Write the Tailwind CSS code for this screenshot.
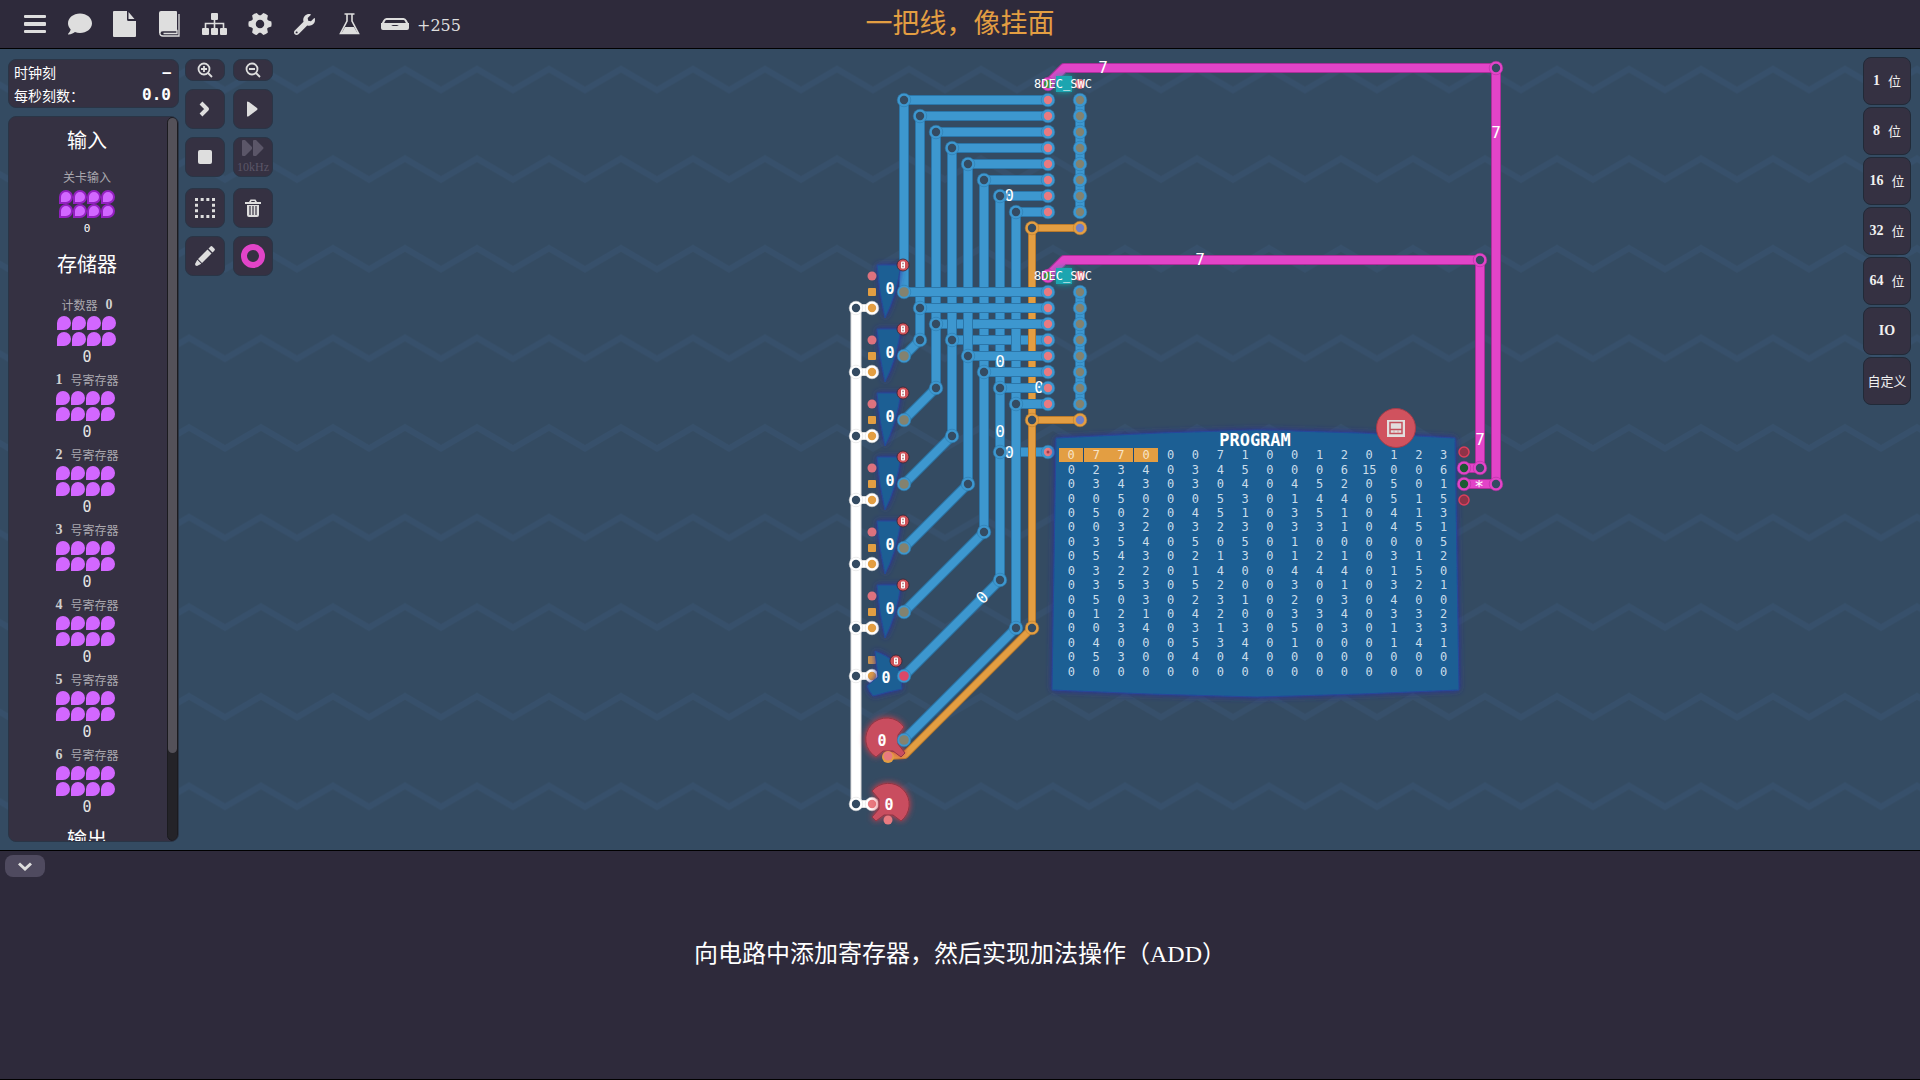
<!DOCTYPE html>
<html lang="zh-CN">
<head>
  <meta charset="UTF-8" />
  <meta name="viewport" content="width=device-width, initial-scale=1.0" />
  <script src="https://cdn.jsdelivr.net/npm/@tailwindcss/browser@4"></script>
  <title>一把线，像挂面</title>
</head>
<body class="h-screen flex flex-col overflow-hidden bg-[#2e2a3b] text-white font-['Noto_Sans','Noto_Sans_CJK_SC',sans-serif]">

  <!-- Top bar -->
  <header class="relative h-[49px] shrink-0 flex items-center border-b border-black pl-3 text-[#dedede]">
    <nav class="flex items-center" aria-label="工具栏">
      <button aria-label="菜单" class="w-[45px] h-8 flex items-center justify-center">
        <svg class="w-[22px] h-[18px]" viewBox="0 0 22 18" fill="currentColor"><rect width="22" height="3" rx="1"/><rect y="7" width="22" height="4" rx="1"/><rect y="15" width="22" height="3" rx="1"/></svg>
      </button>
      <button aria-label="对话" class="w-[45px] h-8 flex items-center justify-center">
        <svg class="w-6 h-6" viewBox="0 0 512 512" fill="currentColor"><path d="M256 32C114.6 32 0 125.1 0 240c0 49.6 21.4 95 57 130.7C44.5 421.1 2.7 466 2.2 466.5c-2.2 2.3-2.8 5.7-1.5 8.7S4.800 480 8 480c66.300 0 116-31.800 140.600-51.400 32.700 12.300 69 19.400 107.400 19.400 141.400 0 256-93.100 256-208S397.400 32 256 32z"/></svg>
      </button>
      <button aria-label="文件" class="w-[45px] h-8 flex items-center justify-center">
        <svg class="w-[23px] h-[26px]" viewBox="0 0 23 26" fill="currentColor"><path d="M1 0h13v8.500a1.500 1.500 0 0 0 1.500 1.500H23v15a1 1 0 0 1-1 1H1a1 1 0 0 1-1-1V1a1 1 0 0 1 1-1zM15.500 1l6 7h-6z"/></svg>
      </button>
      <button aria-label="手册" class="w-[45px] h-8 flex items-center justify-center">
        <svg class="w-[21px] h-[26px]" viewBox="0 0 21 26" fill="none" stroke="currentColor"><path d="M2 0h15a1 1 0 0 1 1 1v18H5c-3 0-3.500 2-3.500 3H0V2a2 2 0 0 1 2-2z" fill="currentColor" stroke="none"/><path d="M20 3v22H4c-4 0-4.500-5.500 0-5.500h14v3H4.500" stroke-width="1.300"/></svg>
      </button>
      <button aria-label="架构" class="w-[45px] h-8 flex items-center justify-center">
        <svg class="w-[25px] h-[22px]" viewBox="0 0 25 22" fill="currentColor"><rect x="9" width="7" height="7" rx="1"/><rect y="15" width="7" height="7" rx="1"/><rect x="9" y="15" width="7" height="7" rx="1"/><rect x="18" y="15" width="7" height="7" rx="1"/><path d="M3.500 15v-4.500h18V15M12.500 7v8" fill="none" stroke="currentColor" stroke-width="1.600"/></svg>
      </button>
      <button aria-label="设置" class="w-[45px] h-8 flex items-center justify-center">
        <svg class="w-6 h-6" viewBox="-12 -12 24 24" fill="currentColor"><circle r="6.500" fill="none" stroke="currentColor" stroke-width="4.500"/><g id="teeth"><path id="tooth" d="M7-4L11.300-2.600Q12 0 11.300 2.600L7 4z"/><use href="#tooth" transform="rotate(60)"/><use href="#tooth" transform="rotate(120)"/></g><use href="#teeth" transform="rotate(180)"/></svg>
      </button>
      <button aria-label="工具" class="w-[45px] h-8 flex items-center justify-center">
        <svg class="w-[21px] h-[21px]" viewBox="0 0 512 512" fill="currentColor"><path d="M507.730 109.100c-2.240-9.030-13.540-12.090-20.120-5.510l-74.360 74.360-67.880-11.310-11.310-67.880 74.360-74.360c6.620-6.620 3.430-17.900-5.660-20.160-47.380-11.740-99.550.91-136.580 37.930-39.640 39.640-50.550 97.100-34.050 147.200L18.740 402.760c-24.990 24.990-24.990 65.510 0 90.500 24.990 24.990 65.510 24.990 90.500 0l213.210-213.210c50.120 16.710 107.470 5.680 147.370-34.220 37.070-37.070 49.700-89.320 37.910-136.730zM64 472c-13.250 0-24-10.750-24-24 0-13.260 10.750-24 24-24s24 10.740 24 24c0 13.250-10.750 24-24 24z"/></svg>
      </button>
      <button aria-label="测试" class="w-[45px] h-8 flex items-center justify-center">
        <svg class="w-[21px] h-[22px]" viewBox="0 0 21 22" fill="none" stroke="currentColor" stroke-width="1.600"><path d="M5.500 1h10M8 1v7L1.500 20.500h18L13 8V1"/><path d="M6 14h9l4 7H2z" fill="currentColor" stroke="none"/></svg>
      </button>
      <button aria-label="存储空间" class="w-[45px] h-8 flex items-center justify-center">
        <svg class="w-7 h-3" viewBox="0 0 28 12" fill="none" stroke="currentColor"><path d="M5.500 1h17Q24 1 25 3l1.500 3H1.500L3 3Q4 1 5.500 1z" stroke-width="2"/><path d="M0 5h9q1 3 3 3h4q2 0 3-3h9v5q0 2-2 2H2q-2 0-2-2z" fill="currentColor" stroke="none"/></svg>
      </button>
    </nav>
    <span class="pt-1 text-base font-['DejaVu_Serif',serif]">+255</span>
    <h1 class="absolute inset-x-0 top-0 h-[45px] flex items-center justify-center text-[27px] text-[#e39e42] font-['Noto_Sans_CJK_SC',sans-serif] pointer-events-none">一把线，像挂面</h1>
  </header>

  <main class="relative flex-1 min-h-0 flex items-start bg-[#344b62]">

    <!-- Circuit canvas -->
    <svg id="board" class="absolute inset-0 w-full h-full" viewBox="0 49 1920 801" preserveAspectRatio="xMidYMid slice" font-family="'DejaVu Sans Mono', monospace">
      <defs>
        <pattern id="waves" width="72" height="89.6" patternUnits="userSpaceOnUse" x="9" y="0">
          <path d="M-36 69L0 90L36 69L72 90L108 69" fill="none" stroke="#37506b" stroke-width="6"/>
          <path d="M-36 -20.600L0 .4L36 -20.600L72 .4L108 -20.600" fill="none" stroke="#37506b" stroke-width="6"/>
        </pattern>
        <filter id="glowBlue" x="-30%" y="-30%" width="160%" height="160%"><feDropShadow dx="0" dy="0" stdDeviation="3" flood-color="#2b2f9e"/></filter>
        <filter id="glowRed" x="-40%" y="-40%" width="180%" height="180%"><feDropShadow dx="0" dy="0" stdDeviation="3" flood-color="#d8404e"/></filter>
        <filter id="glowTeal" x="-60%" y="-60%" width="220%" height="220%"><feDropShadow dx="0" dy="0" stdDeviation="3" flood-color="#12a0a0"/></filter>
      </defs>
      <rect y="49" width="1920" height="801" fill="url(#waves)"/>
      <g id="wires" fill="none" stroke-linejoin="round"></g>
      <g id="labels" fill="#fff" font-size="16" text-anchor="middle"></g>
      <g id="joints"></g>
      <g id="chips"></g>
      <path d="M1056 438L1160 433L1257 430L1360 433L1455 438L1459 690L1360 694L1257 697L1150 694L1052 690z" fill="#1b5f94" stroke="#27489a" stroke-linejoin="round" filter="url(#glowBlue)"/>
      <text x="1255" y="446" fill="#fff" font-size="17" font-weight="bold" text-anchor="middle">PROGRAM</text>
      <foreignObject x="1059" y="448" width="398" height="232">
        <table class="w-[397px] h-[231px] table-fixed border-collapse text-center text-xs leading-[14px] text-[#c9dcea] font-['DejaVu_Sans_Mono',monospace]">
          <tbody id="memory"></tbody>
        </table>
      </foreignObject>
      <circle cx="1396" cy="428" r="19.500" fill="#d0525e" stroke="#a83c4a"/>
      <rect x="1387" y="420" width="18" height="17" fill="#e2dede"/>
      <path d="M1390 422.500h12v11h-12zM1390 429.500h12" fill="none" stroke="#c4505c" stroke-width="1.500"/>
      <path d="M1394 430v3M1398 430v3" stroke="#d8a0a4"/>
      <g id="pins"></g>
    </svg>

    <!-- Component palette -->
    <aside class="relative w-[171px] ml-2 mt-[10px] mb-2 self-stretch flex flex-col gap-2 min-h-0">
      <dl class="h-[49px] shrink-0 grid grid-cols-[auto_auto] justify-between items-center rounded-lg bg-[#353142] border border-[#2a3546] pl-[5px] pr-[7px] text-sm leading-[22px] font-['Noto_Sans_CJK_SC',sans-serif]">
        <dt>时钟刻</dt><dd class="text-right font-bold font-['DejaVu_Sans_Mono',monospace]">–</dd>
        <dt>每秒刻数：</dt><dd class="text-right text-base leading-[22px] font-bold font-['DejaVu_Sans_Mono',monospace]">0.0</dd>
      </dl>
      <div class="relative flex-1 min-h-0 overflow-hidden rounded-lg bg-[#353142] border border-[#2a3546]">
        <div id="palette" class="w-[156px] flex flex-col items-center font-['Noto_Sans_CJK_SC',sans-serif]"></div>
        <div class="absolute right-0 inset-y-0 w-[11px] rounded-lg bg-[#242328] border border-[#1b1b1f]">
          <div class="h-[88%] rounded-lg bg-[#545159]"></div>
        </div>
      </div>
    </aside>

    <!-- Simulation and edit tools -->
    <div class="relative ml-[6px] mt-[10px] grid grid-cols-2 gap-x-2 gap-y-2 text-[#dedede]">
      <button aria-label="放大" class="w-10 h-[22px] rounded-lg bg-[#353142] border border-[#2a3546] flex items-center justify-center">
        <svg class="w-4 h-4" viewBox="0 0 16 16" fill="none" stroke="currentColor" stroke-width="1.800"><circle cx="7" cy="7" r="5.500"/><path d="M11 11l4 4M4 7h6M7 4v6"/></svg>
      </button>
      <button aria-label="缩小" class="w-10 h-[22px] rounded-lg bg-[#353142] border border-[#2a3546] flex items-center justify-center">
        <svg class="w-4 h-4" viewBox="0 0 16 16" fill="none" stroke="currentColor" stroke-width="1.800"><circle cx="7" cy="7" r="5.500"/><path d="M11 11l4 4M4 7h6"/></svg>
      </button>
      <button aria-label="单步" class="w-10 h-10 rounded-lg bg-[#353142] border border-[#2a3546] flex items-center justify-center">
        <svg class="w-3 h-4" viewBox="0 0 12 16" fill="none" stroke="currentColor" stroke-width="4"><path d="M2 2l6 6-6 6" stroke-linejoin="round"/></svg>
      </button>
      <button aria-label="运行" class="w-10 h-10 rounded-lg bg-[#353142] border border-[#2a3546] flex items-center justify-center">
        <svg class="w-3 h-4" viewBox="0 0 12 16" fill="currentColor"><path d="M0 1q0-1 2 0l8 6q1 1 0 2l-8 6q-2 1-2 0z"/></svg>
      </button>
      <button aria-label="停止" class="w-10 h-10 rounded-lg bg-[#353142] border border-[#2a3546] flex items-center justify-center">
        <span class="w-[14px] h-[14px] rounded-xs bg-[#dedede]"></span>
      </button>
      <button class="w-10 h-10 rounded-lg bg-[#353142] border border-[#2a3546] flex flex-col items-center justify-center text-[#5b5668]">
        <svg class="w-[22px] h-4" viewBox="0 0 22 16" fill="currentColor"><path d="M1 0h2l7 7v2l-7 7H1q-1 0-1-1V1q0-1 1-1zM12 0h2l7 7q1 1 0 2l-7 7h-2q-1 0-1-1V1q0-1 1-1z"/></svg>
        <span class="pt-1 text-xs leading-[14px] font-['Liberation_Serif',serif]">10kHz</span>
      </button>
      <button aria-label="框选" class="mt-[3px] w-10 h-10 rounded-lg bg-[#353142] border border-[#2a3546] flex items-center justify-center">
        <svg class="w-5 h-5" viewBox="0 0 20 20" fill="none" stroke="currentColor" stroke-width="3"><path d="M0 1.500h20M0 18.500h20" stroke-dasharray="3 2.667"/><path d="M1.500 0v20M18.500 0v20" stroke-dasharray="3 2.667"/></svg>
      </button>
      <button aria-label="删除" class="mt-[3px] w-10 h-10 rounded-lg bg-[#353142] border border-[#2a3546] flex items-center justify-center">
        <svg class="w-4 h-[18px]" viewBox="0 0 16 18" fill="currentColor"><path d="M0 3h4l1.500-2.500h5L12 3h4v2H0zM6 3h4l-.5-1h-3zM2 6h12v10q0 2-2 2H4q-2 0-2-2z" fill-rule="evenodd"/><path d="M5 7v9M8 7v9M11 7v9" stroke="#353142" stroke-width="1.200"/></svg>
      </button>
      <button aria-label="编辑" class="w-10 h-10 rounded-lg bg-[#353142] border border-[#2a3546] flex items-center justify-center">
        <svg class="w-5 h-5" viewBox="0 0 20 20" fill="currentColor"><path d="M12.500 3.500l4 4L7 17l-4-4zM2.300 13.700l4 4L2 20q-2 0-2-2zM13.500 2.500l1.800-1.800q1-1.200 2.300 0l1.700 1.700q1.200 1.200 0 2.300l-1.800 1.800z"/></svg>
      </button>
      <button aria-label="导线颜色" class="w-10 h-10 rounded-lg bg-[#353142] border border-[#2a3546] flex items-center justify-center">
        <span class="w-6 h-6 rounded-full border-[6px] border-[#e244c8]"></span>
      </button>
    </div>

    <!-- Component categories -->
    <div id="categories" class="relative ml-auto mr-[9px] mt-2 flex flex-col gap-[2px]"></div>
  </main>

  <!-- Instructions -->
  <footer class="relative h-[230px] shrink-0 border-y border-black flex items-center justify-center pb-[22px]">
    <button aria-label="收起" class="absolute left-[5px] top-1 w-10 h-[22px] rounded-lg bg-[#4f4a5f] flex items-center justify-center text-[#dedede]">
      <svg class="w-[14px] h-[9px]" viewBox="0 0 14 9" fill="none" stroke="currentColor" stroke-width="3"><path d="M1 1.500l6 5.500 6-5.500"/></svg>
    </button>
    <p class="text-2xl font-['Liberation_Serif','Noto_Sans_CJK_SC',serif]">向电路中添加寄存器，然后实现加法操作（ADD）</p>
  </footer>

  <script>
    const BLUE = ["#3d97cf", "#2b76a9"];
    const ORANGE = ["#e39e42", "#b97a2c"];
    const PINK = ["#e244c8", "#ab2f9a"];
    const WHITE = ["#ffffff", "#d9d9d9"];
    const HOLE = "#344b62";

    const range = n => [...Array(n).keys()];
    const add = (id, html) => document.getElementById(id).insertAdjacentHTML("beforeend", html);

    function wire(points, color, width = 8) {
      add("wires", `<path d="M${points}" stroke="${color[1]}" stroke-width="${width + 2}"/><path d="M${points}" stroke="${color[0]}" stroke-width="${width}"/>`);
    }

    function ring(layer, x, y, color, fill, r = 4.2) {
      add(layer, `<circle cx="${x}" cy="${y}" r="6.8" fill="${color[0]}" stroke="${color[1]}" stroke-width="0.5"/><circle cx="${x}" cy="${y}" r="${r}" fill="${fill}"/>`);
    }

    // output wires of the six gates, then of the counter and the level output
    const bend = [292, 340, 388, 436, 484, 532, 580, 628];
    const pinY = [292, 356, 420, 484, 548, 612, 676, 740];
    const busX = k => 904 + 16 * k;
    const down = k => wire(`${busX(k)} ${100 + 16 * k}V${bend[k]}L904 ${pinY[k]}`, BLUE);
    const across = k => wire(`${busX(k)} ${292 + 16 * k}H1048`, BLUE);

    [0, 1, 2, 5, 6].forEach(down);
    range(8).forEach(k => wire(`${busX(k)} ${100 + 16 * k}H1048`, BLUE));
    across(3);
    wire("1000 452H1048", BLUE);
    down(7);
    wire("1080 228H1032V628L905 755L888 756", ORANGE, 6);
    wire("1032 420H1080", ORANGE, 6);
    across(2);
    down(3);
    down(4);
    [0, 1, 4, 5, 6, 7].forEach(across);
    wire("1080 100V212", BLUE);
    wire("1080 292V404", BLUE);
    wire("1048 84L1064 68H1496V484H1464", PINK);
    wire("1048 276L1064 260H1480V468H1464", PINK);
    wire("856 308V804", WHITE, 9);
    [308, 372, 436, 500, 564, 628, 676, 804].forEach(y => {
      wire(`856 ${y}H872`, WHITE, 6);
      ring("joints", 856, y, WHITE, HOLE);
      ring("joints", 872, y, WHITE, y === 804 ? "#e87a80" : "#e39e42");
    });

    range(8).forEach(k => {
      ring("joints", busX(k), 100 + 16 * k, BLUE, HOLE);
      if (k) {
        ring("joints", busX(k), 292 + 16 * k, BLUE, HOLE);
        ring("joints", busX(k), bend[k], BLUE, HOLE);
      }
      [100, 292].forEach(y => {
        ring("joints", 1048, y + 16 * k, BLUE, "#e87a80");
        ring("joints", 1080, y + 16 * k, BLUE, "#83826f");
      });
      ring("pins", 904, pinY[k], BLUE, k === 6 ? "#dc4766" : "#83826f", 4.8);
    });
    ring("joints", 1000, 452, BLUE, HOLE);
    ring("joints", 1048, 452, BLUE, "#e87a80");
    add("joints", `<circle cx="1048" cy="452" r="1.5" fill="#9c3f50"/>`);
    [[1032, 228], [1032, 420], [1032, 628]].forEach(([x, y]) => ring("joints", x, y, ORANGE, HOLE));
    [228, 420].forEach(y => ring("joints", 1080, y, ORANGE, "#6f80c8"));
    [[1496, 68], [1480, 260], [1480, 468], [1496, 484]].forEach(([x, y]) => ring("joints", x, y, PINK, HOLE));

    [[1103, 67, "7"], [1496, 132, "7"], [1200, 259, "7"], [1480, 439, "7"], [1479, 486, "*"],
     [1009, 195, "0"], [1000, 361, "0"], [1039, 387, "0"], [1000, 431, "0"], [1009, 452, "0"]].forEach(([x, y, t]) => {
      add("labels", `<text x="${x}" y="${y + 6}">${t}</text>`);
    });
    add("labels", `<text x="982" y="603" transform="rotate(-45 982 597)">0</text>`);

    function badge(x, y) {
      add("pins", `<circle cx="${x}" cy="${y}" r="6" fill="#cf5259" stroke="#3a2330" stroke-width="0.8"/><rect x="${x - 2}" y="${y - 3.5}" width="4" height="7" rx="1" fill="#fff"/><path d="M${x} ${y - 2.300}v1.600M${x} ${y + 0.700}v1.600" stroke="#7a3038"/>`);
    }

    function value(x, y) {
      add("chips", `<text x="${x}" y="${y + 6}" font-size="15" font-weight="bold" fill="#fff" text-anchor="middle">0</text>`);
    }

    // gates
    range(6).forEach(i => {
      const y = 265 + 64 * i;
      add("chips", `<path d="M877 ${y}h24q-5 32-16 53q-6-26-8-53z" fill="#1b5f94" stroke="#27489a" filter="url(#glowBlue)"/>
        <circle cx="872" cy="${y + 11}" r="4.500" fill="#dd727e"/>
        <rect x="868" y="${y + 23}" width="8" height="8" rx="1" fill="#e39e42"/>`);
      value(890, y + 23);
      badge(903, y);
    });

    // level input
    add("chips", `<rect x="868" y="656" width="8" height="8" rx="1" fill="#c9934f"/>
      <path d="M875 651q12 4 20 12l5 9l2 17q-15 3-29 7q-4-5-6-10q6-5 11-9z" fill="#1b5f94" stroke="#27489a" filter="url(#glowBlue)"/>`);
    value(886, 677);
    badge(896, 661);

    // outputs
    add("chips", `<path d="M904 727A21 21 0 1 0 876 757L883 751H893L901 757L905 753L898 744V735z" fill="#c94d5e" stroke="#8f3544" filter="url(#glowRed)"/>
      <path d="M872 791A21 21 0 1 1 901 821L893 815H884L876 821L872 817L879 809V799z" fill="#c94d5e" stroke="#8f3544" filter="url(#glowRed)"/>
      <circle cx="888" cy="820" r="4.500" fill="#e87a80"/>
      <circle cx="888" cy="757" r="6" fill="#e39e42"/><circle cx="888" cy="756" r="4.500" fill="#e87a80"/>`);
    value(882, 740);
    value(889, 804);

    // decoders
    [84, 276].forEach(y => {
      ring("chips", 1048, y, PINK, "#3f8a3a");
      add("chips", `<rect x="1056" y="${y - 8}" width="16" height="16" fill="#1fa5b0" filter="url(#glowTeal)"/>
        <circle cx="1080" cy="${y}" r="5" fill="#dd727e"/>
        <text x="1063" y="${y + 4}" font-size="12" fill="#fff" text-anchor="middle">8DEC_SWC</text>`);
    });

    // program outputs
    [452, 500].forEach(y => add("pins", `<circle cx="1464" cy="${y}" r="5" fill="#8e3348" stroke="#dd3f5c" stroke-width="1.500"/>`));
    [468, 484].forEach(y => ring("pins", 1464, y, PINK, "#1c5a33"));

    const memory = [
      "0 7 7 0 0 0 7 1 0 0 1 2 0 1 2 3",
      "0 2 3 4 0 3 4 5 0 0 0 6 15 0 0 6",
      "0 3 4 3 0 3 0 4 0 4 5 2 0 5 0 1",
      "0 0 5 0 0 0 5 3 0 1 4 4 0 5 1 5",
      "0 5 0 2 0 4 5 1 0 3 5 1 0 4 1 3",
      "0 0 3 2 0 3 2 3 0 3 3 1 0 4 5 1",
      "0 3 5 4 0 5 0 5 0 1 0 0 0 0 0 5",
      "0 5 4 3 0 2 1 3 0 1 2 1 0 3 1 2",
      "0 3 2 2 0 1 4 0 0 4 4 4 0 1 5 0",
      "0 3 5 3 0 5 2 0 0 3 0 1 0 3 2 1",
      "0 5 0 3 0 2 3 1 0 2 0 3 0 4 0 0",
      "0 1 2 1 0 4 2 0 0 3 3 4 0 3 3 2",
      "0 0 3 4 0 3 1 3 0 5 0 3 0 1 3 3",
      "0 4 0 0 0 5 3 4 0 1 0 0 0 1 4 1",
      "0 5 3 0 0 4 0 4 0 0 0 0 0 0 0 0",
      "0 0 0 0 0 0 0 0 0 0 0 0 0 0 0 0",
    ];
    add("memory", memory.map((row, r) => `<tr>${row.split(" ").map((v, c) => {
      const lit = r === 0 && c < 4;
      const edge = lit && (c === 1 || c === 3);
      return `<td class="p-0 ${lit ? "bg-[#e39e42] text-[#f7e4c8]" : ""} ${edge ? "border-l border-[#1b4a78]" : ""}">${v}</td>`;
    }).join("")}</tr>`).join(""));

    // palette
    const heading = text => `<h2 class="text-xl leading-6">${text}</h2>`;
    const petals = range(8).map(() => `<i class="w-[14px] h-[14px] rounded-full rounded-bl-none bg-[#d267ff]"></i>`).join("");
    const inputPetals = range(8).map(() => `<i class="w-[14px] h-[14px] rounded-full rounded-bl-none bg-[#d267ff] border-2 border-[#9320c0]"></i>`).join("");
    const item = label => `<button class="h-[75px] flex flex-col items-center">
        <span class="flex items-center gap-2 text-xs leading-[18px] text-[#a9a7ae]">${label}</span>
        <span class="mt-[2px] grid grid-cols-4 gap-x-[1px] gap-y-[2px] mr-[2px]">${petals}</span>
        <span class="mt-[1px] text-[15px] leading-5 text-[#e4e4e4] font-['DejaVu_Sans_Mono',monospace]">0</span>
      </button>`;
    const digit = n => `<b class="text-sm leading-[18px] text-[#d0d0d0] font-['Liberation_Serif',serif]">${n}</b>`;
    add("palette", `
      <div class="pt-[11px]">${heading("输入")}</div>
      <button class="mt-4 h-[67px] flex flex-col items-center">
        <span class="text-xs leading-[18px] text-[#a9a7ae]">关卡输入</span>
        <span class="mt-1 grid grid-cols-4">${inputPetals}</span>
        <span class="mt-1 text-[11px] leading-[14px] font-['DejaVu_Sans_Mono',monospace]">0</span>
      </button>
      <div class="mt-[17px] mb-5">${heading("存储器")}</div>
      ${item("计数器" + digit(0))}
      ${[1, 2, 3, 4, 5, 6].map(n => item(digit(n) + "号寄存器")).join("")}
      <div class="mt-[6px]">${heading("输出")}</div>`);

    add("categories", ["1 位", "8 位", "16 位", "32 位", "64 位", "IO", "自定义"].map(name => {
      const [n, unit] = name.split(" ");
      const body = unit ? `<b class="text-sm font-['Liberation_Serif',serif]">${n}</b><span>${unit}</span>`
        : n === "IO" ? `<b class="text-sm font-['Liberation_Serif',serif]">IO</b>` : n;
      return `<button class="w-12 h-12 rounded-lg bg-[#353142] border border-[#212a38] flex items-center justify-center gap-2 text-[13px] text-[#f0f0f0] font-['Noto_Sans_CJK_SC',sans-serif]">${body}</button>`;
    }).join(""));
  </script>
</body>
</html>
